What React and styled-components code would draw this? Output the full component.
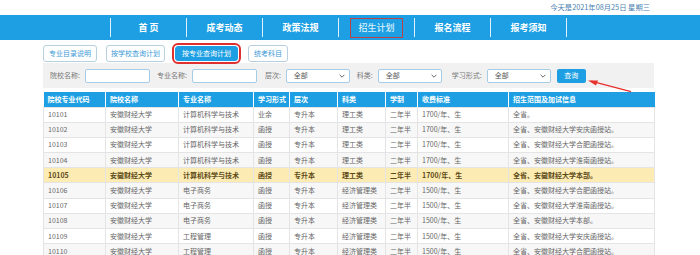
import React from "react";
import styled, { createGlobalStyle, css } from "styled-components";

const BLUE = "#1e9fe3";

const GlobalStyle = createGlobalStyle`
  html, body { margin: 0; padding: 0; background: #fff; }
  body { font-family: "Noto Sans CJK SC", "Noto Sans", sans-serif; }
  * { box-sizing: border-box; }
`;

const Page = styled.div`
  width: 700px;
  height: 255px;
  overflow: hidden;
`;

const DateBar = styled.div`
  width: 611px;
  margin-left: 43px;
  height: 15px;
  display: flex;
  justify-content: flex-end;
  align-items: center;
  padding-right: 4px;
  font-size: 7.3px;
  line-height: 1;
  color: #4a7fb0;
`;

const NavBar = styled.nav`
  height: 25px;
  background: ${BLUE};
  display: flex;
  align-items: center;
  padding-left: 110px;
`;

const Sep = styled.span`
  width: 1px;
  height: 19px;
  background: rgba(255, 255, 255, 0.85);
`;

const NavItem = styled.div`
  width: 75px;
  height: 25px;
  display: flex;
  align-items: center;
  justify-content: center;
`;

const NavLabel = styled.span`
  font-size: 9px;
  line-height: 1;
  font-weight: 700;
  color: #fff;
  white-space: pre;
  ${(p) =>
    p.$active &&
    css`
      width: 53px;
      height: 20px;
      display: flex;
      align-items: center;
      justify-content: center;
      border: 1.5px solid #b9434d;
      color: #d9effc;
      font-weight: 500;
    `}
`;

const Main = styled.div`
  width: 611px;
  margin-left: 43px;
  position: relative;
`;

const Tabs = styled.div`
  display: flex;
  align-items: center;
  gap: 7px;
  margin-top: 4px;
  height: 18px;
`;

const Tab = styled.button`
  height: 17px;
  padding: 0 ${(p) => p.$pad}px;
  margin-right: ${(p) => p.$mr || 0}px;
  border: 1px solid #b6d0dd;
  border-radius: 3px;
  background: #fff;
  color: #3a9ad6;
  font-family: inherit;
  font-size: 7px;
  line-height: 1;
  cursor: pointer;
  ${(p) =>
    p.$active &&
    css`
      height: 15px;
      margin: 0 3px;
      background: ${BLUE};
      border-color: ${BLUE};
      color: #fff;
      outline: 2px solid #df2f2f;
      outline-offset: 1px;
    `}
`;

const Filter = styled.div`
  margin-top: 1px;
  height: 25px;
  background: #f1f1f1;
  display: flex;
  align-items: center;
  padding-left: 7px;
`;

const Field = styled.div`
  display: flex;
  align-items: center;
  gap: 5px;
  margin-right: ${(p) => p.$mr}px;
`;

const Label = styled.span`
  font-size: 7px;
  line-height: 1;
  color: #777;
  white-space: nowrap;
`;

const Input = styled.div`
  width: 65px;
  height: 14px;
  background: #fff;
  border: 1px solid #a6cde6;
  border-radius: 2px;
`;

const Select = styled.div`
  width: 64px;
  height: 14px;
  background: #fff;
  border: 1px solid #a6cde6;
  border-radius: 2px;
  display: flex;
  align-items: center;
  justify-content: space-between;
  padding: 0 4px 0 7px;
  font-size: 7px;
  line-height: 1;
  color: #555;
`;

const QueryBtn = styled.button`
  width: 29px;
  height: 14px;
  border: none;
  border-radius: 2px;
  background: ${BLUE};
  color: #fff;
  font-family: inherit;
  font-size: 7px;
  line-height: 1;
  padding: 0;
`;

const Arrow = styled.svg`
  position: absolute;
  left: 544px;
  top: 34px;
  overflow: visible;
`;

const Table = styled.table`
  margin-top: 4px;
  width: 611px;
  border-collapse: collapse;
  table-layout: fixed;
  font-size: 7px;
  line-height: 1;
`;

const Th = styled.th`
  height: 15px;
  padding: 0 0 0 4px;
  background: ${BLUE};
  color: #fff;
  font-weight: 700;
  text-align: left;
  white-space: nowrap;
  border-left: 1px solid #fff;
  &:first-child { border-left: none; }
`;

const Tr = styled.tr`
  background: ${(p) => (p.$hl ? "#fcebb2" : p.$even ? "#f7f7f7" : "#fff")};
  color: ${(p) => (p.$hl ? "#5c4a17" : "#666")};
  font-weight: ${(p) => (p.$hl ? 700 : 400)};
`;

const Td = styled.td`
  height: 15.2px;
  padding: 0 0 0 4px;
  white-space: nowrap;
  overflow: hidden;
  border: 1px solid #e4e4e4;
`;

const Chevron = () => (
  <svg width="6" height="4" viewBox="0 0 6 4">
    <path d="M0.6 0.8 L3 3.2 L5.4 0.8" fill="none" stroke="#555" strokeWidth="0.9" />
  </svg>
);

const navItems = ["首 页", "成考动态", "政策法规", "招生计划", "报名流程", "报考须知"];

const cols = [62, 73, 75, 36, 48, 48, 32, 91, 146];
const heads = ["院校专业代码", "院校名称", "专业名称", "学习形式", "层次", "科类", "学制", "收费标准", "招生范围及加试信息"];

const cs = "计算机科学与技术";
const rows = [
  ["10101", cs, "业余", "理工类", "1700", "全省。"],
  ["10102", cs, "函授", "理工类", "1700", "全省、安徽财经大学安庆函授站。"],
  ["10103", cs, "函授", "理工类", "1700", "全省、安徽财经大学合肥函授站。"],
  ["10104", cs, "函授", "理工类", "1700", "全省、安徽财经大学淮南函授站。"],
  ["10105", cs, "函授", "理工类", "1700", "全省、安徽财经大学本部。"],
  ["10106", "电子商务", "函授", "经济管理类", "1500", "全省、安徽财经大学合肥函授站。"],
  ["10107", "电子商务", "函授", "经济管理类", "1500", "全省、安徽财经大学淮南函授站。"],
  ["10108", "电子商务", "函授", "经济管理类", "1500", "全省、安徽财经大学本部。"],
  ["10109", "工程管理", "函授", "经济管理类", "1500", "全省、安徽财经大学安庆函授站。"],
  ["10110", "工程管理", "函授", "经济管理类", "1500", "全省、安徽财经大学合肥函授站。"],
];

export default function App() {
  return (
    <Page>
      <GlobalStyle />
      <DateBar>今天是2021年08月25日 星期三</DateBar>
      <NavBar>
        {navItems.map((t, i) => (
          <React.Fragment key={t}>
            <Sep />
            <NavItem>
              <NavLabel $active={i === 3}>{t}</NavLabel>
            </NavItem>
          </React.Fragment>
        ))}
        <Sep />
      </NavBar>
      <Main>
        <Tabs>
          <Tab $pad={5} $mr={2}>专业目录说明</Tab>
          <Tab $pad={4}>按学校查询计划</Tab>
          <Tab $pad={6} $active>按专业查询计划</Tab>
          <Tab $pad={5}>统考科目</Tab>
        </Tabs>
        <Filter>
          <Field $mr={7}>
            <Label>院校名称:</Label>
            <Input />
          </Field>
          <Field $mr={8}>
            <Label>专业名称:</Label>
            <Input />
          </Field>
          <Field $mr={7}>
            <Label>层次:</Label>
            <Select>全部<Chevron /></Select>
          </Field>
          <Field $mr={10}>
            <Label>科类:</Label>
            <Select>全部<Chevron /></Select>
          </Field>
          <Field $mr={6}>
            <Label>学习形式:</Label>
            <Select>全部<Chevron /></Select>
          </Field>
          <QueryBtn>查询</QueryBtn>
        </Filter>
        <Arrow width="46" height="14" viewBox="0 0 46 14">
          <path d="M4 3.2 L44 13.6" stroke="#e8312c" strokeWidth="1.3" fill="none" />
          <path d="M1 2.4 L11 2.6 L9 7.6 Z" fill="#e8312c" />
        </Arrow>
        <Table>
          <colgroup>
            {cols.map((w, i) => (
              <col key={i} style={{ width: w }} />
            ))}
          </colgroup>
          <thead>
            <tr>
              {heads.map((h) => (
                <Th key={h}>{h}</Th>
              ))}
            </tr>
          </thead>
          <tbody>
            {rows.map((r, i) => (
              <Tr key={r[0]} $even={i % 2 === 1} $hl={i === 4}>
                <Td>{r[0]}</Td>
                <Td>安徽财经大学</Td>
                <Td>{r[1]}</Td>
                <Td>{r[2]}</Td>
                <Td>专升本</Td>
                <Td>{r[3]}</Td>
                <Td>二年半</Td>
                <Td>{r[4]}/年、生</Td>
                <Td>{r[5]}</Td>
              </Tr>
            ))}
          </tbody>
        </Table>
      </Main>
    </Page>
  );
}
